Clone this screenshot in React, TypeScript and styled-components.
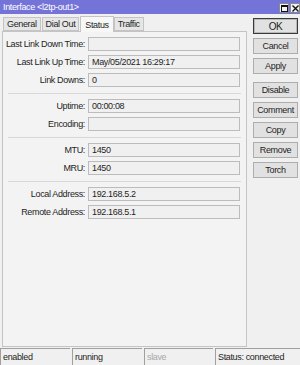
import React from "react";
import styled, { createGlobalStyle } from "styled-components";

const Global = createGlobalStyle`
  html, body {
    margin: 0;
    padding: 0;
    background: #f0f0f0;
  }
  * {
    box-sizing: border-box;
  }
`;

const tabs = ["General", "Dial Out", "Status", "Traffic"];

const sections = [
  [
    { label: "Last Link Down Time:", value: "" },
    { label: "Last Link Up Time:", value: "May/05/2021 16:29:17" },
    { label: "Link Downs:", value: "0" },
  ],
  [
    { label: "Uptime:", value: "00:00:08" },
    { label: "Encoding:", value: "" },
  ],
  [
    { label: "MTU:", value: "1450" },
    { label: "MRU:", value: "1450" },
  ],
  [
    { label: "Local Address:", value: "192.168.5.2" },
    { label: "Remote Address:", value: "192.168.5.1" },
  ],
];

const buttons = ["OK", "Cancel", "Apply", "Disable", "Comment", "Copy", "Remove", "Torch"];

const status = [
  { text: "enabled", w: 70 },
  { text: "running", w: 70 },
  { text: "slave", w: 69, dim: true },
  { text: "Status: connected", w: 0 },
];

const App = () => {
  return (
    <Window>
      <Global />
      <TitleBar>
        <Title>Interface &lt;l2tp-out1&gt;</Title>
        <Controls>
          <CtrlBox>
            <svg width="7" height="7" viewBox="0 0 7 7">
              <rect x="0.5" y="0.5" width="6" height="6" fill="none" stroke="#111" />
              <line x1="0" y1="1.5" x2="7" y2="1.5" stroke="#111" />
            </svg>
          </CtrlBox>
          <CtrlBox>
            <svg width="7" height="7" viewBox="0 0 7 7">
              <path d="M0.5 0.5 L6.5 6.5 M6.5 0.5 L0.5 6.5" stroke="#111" strokeWidth="1.4" />
            </svg>
          </CtrlBox>
        </Controls>
      </TitleBar>
      <Body>
        <Main>
          <Tabs>
            {tabs.map((t) => (
              <Tab key={t} active={t === "Status"}>
                {t}
              </Tab>
            ))}
          </Tabs>
          <Panel>
            {sections.map((rows, i) => (
              <React.Fragment key={i}>
                {i > 0 && <Separator />}
                <Section>
                  {rows.map((r) => (
                    <Row key={r.label}>
                      <Label>{r.label}</Label>
                      <Field>{r.value}</Field>
                    </Row>
                  ))}
                </Section>
              </React.Fragment>
            ))}
          </Panel>
        </Main>
        <Side>
          {buttons.map((b) => (
            <Button key={b} primary={b === "OK"} gapAbove={b === "Disable"}>
              {b}
            </Button>
          ))}
        </Side>
      </Body>
      <StatusBar>
        {status.map((s) => (
          <Cell key={s.text} w={s.w} dim={s.dim}>
            {s.text}
          </Cell>
        ))}
      </StatusBar>
    </Window>
  );
};

export default App;

const Window = styled.div`
  width: 300px;
  height: 365px;
  display: flex;
  flex-direction: column;
  background: #f0f0f0;
  font-family: "Liberation Sans", Arial, sans-serif;
  font-size: 9px;
  letter-spacing: -0.35px;
  color: #1e1e1e;
  overflow: hidden;
`;

const TitleBar = styled.div`
  height: 14px;
  background: #7474d8;
  display: flex;
  align-items: center;
  justify-content: space-between;
  padding-left: 3px;
`;

const Title = styled.span`
  color: #ffffff;
  font-size: 9px;
`;

const Controls = styled.div`
  display: flex;
  gap: 1px;
  align-self: flex-end;
  margin-bottom: 1px;
`;

const CtrlBox = styled.div`
  width: 10px;
  height: 10px;
  background: #f2f2f2;
  border: 1px solid #8a8a8a;
  display: flex;
  align-items: center;
  justify-content: center;
`;

const Body = styled.div`
  flex: 1;
  display: flex;
  min-height: 0;
`;

const Main = styled.div`
  width: 247px;
  display: flex;
  flex-direction: column;
  padding-left: 2px;
  padding-bottom: 1px;
`;

const Tabs = styled.div`
  height: 17px;
  display: flex;
  align-items: flex-end;
  padding-left: 1px;
  position: relative;
  z-index: 1;
`;

const Tab = styled.div<{ active: boolean }>`
  height: ${({ active }) => (active ? "16px" : "14px")};
  padding: 0 ${({ active }) => (active ? "4px" : "3px")};
  margin-right: ${({ active }) => (active ? "0" : "1px")};
  margin-bottom: ${({ active }) => (active ? "-1px" : "0")};
  display: flex;
  align-items: center;
  background: ${({ active }) => (active ? "#f7f7f7" : "#e6e6e6")};
  border: 1px solid #c4c4c4;
  border-bottom: ${({ active }) => (active ? "none" : "1px solid #c4c4c4")};
`;

const Panel = styled.div`
  flex: 1;
  border: 1px solid #c4c4c4;
  background: #f3f3f3;
  padding: 5px 5px 0 0;
`;

const Section = styled.div`
  display: flex;
  flex-direction: column;
  gap: 4px;
`;

const Row = styled.div`
  display: grid;
  grid-template-columns: 82px 152px;
  column-gap: 3px;
  align-items: center;
  height: 14px;
`;

const Label = styled.span`
  text-align: right;
  white-space: nowrap;
`;

const Field = styled.div`
  height: 14px;
  border: 1px solid #bcbcbc;
  background: #f0f0f0;
  padding-left: 3px;
  display: flex;
  align-items: center;
  white-space: nowrap;
`;

const Separator = styled.div`
  height: 1px;
  background: #d8d8d8;
  margin: 6px 0 5px 5px;
`;

const Side = styled.div`
  flex: 1;
  display: flex;
  flex-direction: column;
  gap: 4px;
  padding: 4px 0 0 6px;
`;

const Button = styled.div<{ primary: boolean; gapAbove: boolean }>`
  width: 45px;
  height: 16px;
  display: flex;
  align-items: center;
  justify-content: center;
  background: #e1e1e1;
  border: 1px solid ${({ primary }) => (primary ? "#3a3a3a" : "#adadad")};
  box-shadow: ${({ primary }) => (primary ? "inset 0 0 0 1px #b8b8b8" : "none")};
  margin-top: ${({ gapAbove }) => (gapAbove ? "4px" : "0")};
  font-size: ${({ primary }) => (primary ? "10px" : "9px")};
`;

const StatusBar = styled.div`
  height: 17px;
  display: flex;
  background: #f0f0f0;
`;

const Cell = styled.div<{ w: number; dim?: boolean }>`
  width: ${({ w }) => (w ? `${w}px` : "auto")};
  flex: ${({ w }) => (w ? "none" : "1")};
  border-top: 1px solid #a0a0a0;
  border-left: 1px solid #a0a0a0;
  margin-left: 2px;
  padding-left: 2px;
  display: flex;
  align-items: center;
  color: ${({ dim }) => (dim ? "#a8a8a8" : "#1e1e1e")};
  &:first-child {
    margin-left: 0;
  }
`;
